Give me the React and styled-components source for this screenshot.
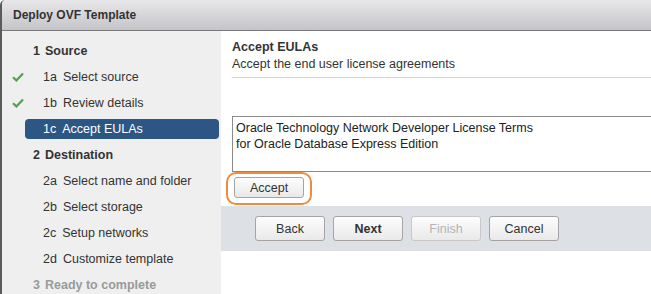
import styled, { createGlobalStyle } from "styled-components";

const Global = createGlobalStyle`
    html, body {
        margin: 0;
        padding: 0;
        background: #ffffff;
        overflow: hidden;
    }
    body {
        font-family: "Liberation Sans", Arial, sans-serif;
        font-size: 12px;
        color: #333333;
    }
`;

const Dialog = styled.div`
    width: 720px;
    height: 294px;
    display: flex;
    flex-direction: column;
    border-left: 2px solid #5a5a5a;
    border-top-left-radius: 5px;
    overflow: hidden;
`;

const TitleBar = styled.div`
    height: 30px;
    flex: none;
    display: flex;
    align-items: center;
    padding-left: 11px;
    background: linear-gradient(#e7e7e9, #c5c5c9);
    border-bottom: 1px solid #7a7a7a;
    font-size: 12px;
    font-weight: bold;
    color: #333333;
`;

const Body = styled.div`
    flex: 1;
    display: flex;
`;

const Sidebar = styled.ul`
    width: 219px;
    flex: none;
    margin: 0;
    padding: 7px 0 0;
    list-style: none;
    background: #efefef;
`;

const Step = styled.li`
    position: relative;
    height: 26px;
    display: flex;
    align-items: center;
    padding-left: ${(p) => (p.$sub ? "41px" : "31px")};
    font-size: 12.5px;
    font-weight: ${(p) => (p.$sub ? "normal" : "bold")};
    color: ${(p) => (p.$muted ? "#9a9a9a" : "#333333")};
    span {
        position: relative;
        margin-right: ${(p) => (p.$sub ? "6px" : "5px")};
    }
    ${(p) =>
        p.$active &&
        `
        color: #ffffff;
        &::before {
            content: "";
            position: absolute;
            left: 23px;
            right: 2px;
            top: 3px;
            bottom: 3px;
            border-radius: 4px;
            background: #2c5784;
        }
    `}
`;

const Label = styled.em`
    position: relative;
    font-style: normal;
`;

const Check = styled.svg`
    position: absolute;
    left: 10px;
    top: 8px;
`;

const Content = styled.div`
    flex: 1;
    background: #ffffff;
    display: flex;
    flex-direction: column;
`;

const Header = styled.div`
    margin: 0 0 0 11px;
    padding: 8px 0 4px;
    border-bottom: 1px solid #d6d6d6;
    h2 {
        margin: 0;
        font-size: 12.5px;
        line-height: 17px;
        font-weight: bold;
        color: #333333;
    }
    p {
        margin: 0;
        font-size: 12.5px;
        line-height: 17px;
    }
`;

const Eula = styled.div`
    margin: 38px 0 0 11px;
    height: 48px;
    padding: 3px 3px;
    border: 1px solid #8a8a8a;
    font-size: 12.5px;
    line-height: 16px;
    color: #222222;
`;

const Highlight = styled.div`
    align-self: flex-start;
    margin-left: 5px;
    padding: 3px 6px 5px;
    border: 2px solid #ef8a3e;
    border-radius: 10px;
    display: flex;
`;

const Button = styled.button`
    width: ${(p) => p.$w || 70}px;
    height: ${(p) => p.$h || 25}px;
    padding: 0;
    border: 1px solid ${(p) => (p.disabled ? "#c8c8c8" : "#a4a4a4")};
    border-radius: 3px;
    background: linear-gradient(#fdfdfd, #e9e9e9);
    font-family: "Liberation Sans", Arial, sans-serif;
    font-size: 12.5px;
    font-weight: ${(p) => (p.$primary ? "bold" : "normal")};
    color: ${(p) => (p.disabled ? "#b4b4b4" : "#333333")};
    flex: none;
`;

const Footer = styled.div`
    height: 45px;
    margin-top: 1px;
    display: flex;
    align-items: center;
    gap: 8px;
    padding-left: 34px;
    background: #dde0e5;
`;

const Spacer = styled.div`
    width: 83px;
    flex: none;
`;

const CheckMark = () => (
    <Check width="12" height="10" viewBox="0 0 12 10">
        <path d="M1 5.2 L4.4 8.4 L11 1.4" fill="none" stroke="#4aa64a" strokeWidth="2.2" />
    </Check>
);

const steps = [
    { n: "1", label: "Source" },
    { n: "1a", label: "Select source", sub: true, done: true },
    { n: "1b", label: "Review details", sub: true, done: true },
    { n: "1c", label: "Accept EULAs", sub: true, active: true },
    { n: "2", label: "Destination" },
    { n: "2a", label: "Select name and folder", sub: true },
    { n: "2b", label: "Select storage", sub: true },
    { n: "2c", label: "Setup networks", sub: true },
    { n: "2d", label: "Customize template", sub: true },
    { n: "3", label: "Ready to complete", muted: true },
];

const App = () => {
    return (
        <>
            <Global />
            <Dialog>
                <TitleBar>Deploy OVF Template</TitleBar>
                <Body>
                    <Sidebar>
                        {steps.map((s) => (
                            <Step key={s.n} $sub={s.sub} $active={s.active} $muted={s.muted}>
                                {s.done && <CheckMark />}
                                <span>{s.n}</span>
                                <Label>{s.label}</Label>
                            </Step>
                        ))}
                    </Sidebar>
                    <Content>
                        <Header>
                            <h2>Accept EULAs</h2>
                            <p>Accept the end user license agreements</p>
                        </Header>
                        <Eula>
                            Oracle Technology Network Developer License Terms
                            <br />
                            for Oracle Database Express Edition
                        </Eula>
                        <Highlight>
                            <Button $h={21}>Accept</Button>
                        </Highlight>
                        <Footer>
                            <Button>Back</Button>
                            <Button $primary>Next</Button>
                            <Button disabled>Finish</Button>
                            <Button>Cancel</Button>
                            <Spacer />
                            <Button aria-label="Help" />
                        </Footer>
                    </Content>
                </Body>
            </Dialog>
        </>
    );
};

export default App;
